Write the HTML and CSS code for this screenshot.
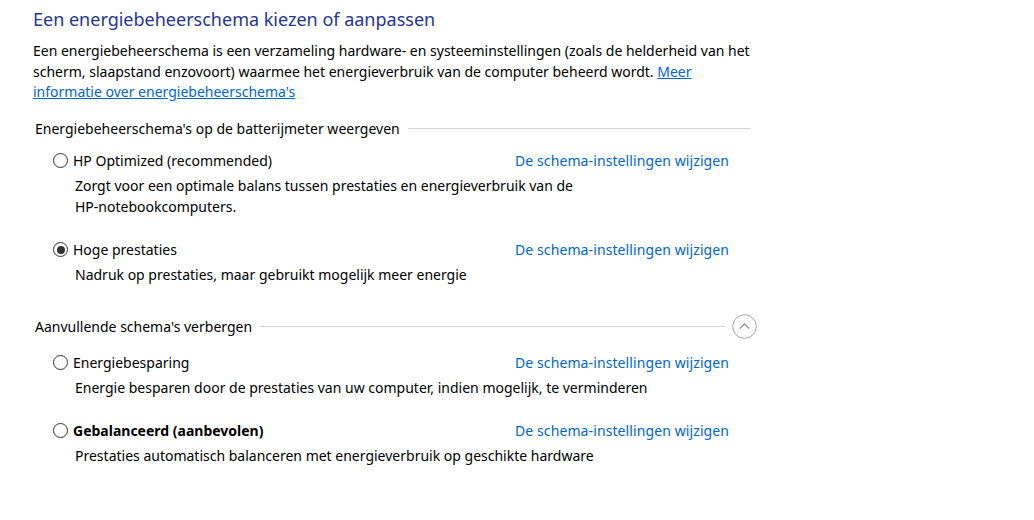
FILE: index.html
```html
<!DOCTYPE html>
<html lang="nl">
<head>
<meta charset="utf-8">
<title>Energiebeheer</title>
<link rel="stylesheet" href="styles.css">
</head>
<body>
<div class="page">
  <h1 class="title">Een energiebeheerschema kiezen of aanpassen</h1>
  <p class="intro">Een energiebeheerschema is een verzameling hardware- en systeeminstellingen (zoals de helderheid van het scherm, slaapstand enzovoort) waarmee het energieverbruik van de computer beheerd wordt. <a class="link" href="#">Meer informatie over energiebeheerschema's</a></p>

  <div class="section-head">
    <span class="section-title">Energiebeheerschema's op de batterijmeter weergeven</span>
    <span class="rule"></span>
  </div>

  <div class="plan">
    <div class="plan-row">
      <label class="plan-label"><span class="radio"></span><span>HP Optimized (recommended)</span></label>
      <a class="plan-link" href="#">De schema-instellingen wijzigen</a>
    </div>
    <div class="plan-desc">Zorgt voor een optimale balans tussen prestaties en energieverbruik van de<br>HP-notebookcomputers.</div>
  </div>

  <div class="plan">
    <div class="plan-row">
      <label class="plan-label"><span class="radio checked"></span><span>Hoge prestaties</span></label>
      <a class="plan-link" href="#">De schema-instellingen wijzigen</a>
    </div>
    <div class="plan-desc">Nadruk op prestaties, maar gebruikt mogelijk meer energie</div>
  </div>

  <div class="section-head second">
    <span class="section-title">Aanvullende schema's verbergen</span>
    <span class="rule"></span>
    <span class="chevron"><svg width="25" height="25" viewBox="0 0 25 25"><circle cx="12.5" cy="12.5" r="11.8" fill="none" stroke="#a6a6a6" stroke-width="1"/><path d="M7.8 14.6 L12.5 9.9 L17.2 14.6" fill="none" stroke="#8a8a8a" stroke-width="1.3"/></svg></span>
  </div>

  <div class="plan">
    <div class="plan-row">
      <label class="plan-label"><span class="radio"></span><span>Energiebesparing</span></label>
      <a class="plan-link" href="#">De schema-instellingen wijzigen</a>
    </div>
    <div class="plan-desc">Energie besparen door de prestaties van uw computer, indien mogelijk, te verminderen</div>
  </div>

  <div class="plan">
    <div class="plan-row">
      <label class="plan-label"><span class="radio"></span><span class="bold">Gebalanceerd (aanbevolen)</span></label>
      <a class="plan-link" href="#">De schema-instellingen wijzigen</a>
    </div>
    <div class="plan-desc">Prestaties automatisch balanceren met energieverbruik op geschikte hardware</div>
  </div>
</div>
</body>
</html>
```

FILE: styles.css
```css
html, body {
  margin: 0;
  padding: 0;
  background: #ffffff;
}
body {
  font-family: "Noto Sans", "Open Sans", sans-serif;
  font-size: 14px;
  color: #000000;
}
.page {
  width: 760px;
  padding: 6px 0 0 33px;
}
.title {
  margin: 0;
  font-size: 18px;
  font-weight: normal;
  color: #1f3597;
  line-height: 26px;
}
.intro {
  margin: 9px 0 0 0;
  width: 720px;
  line-height: 20.5px;
}
.link, .plan-link {
  color: #0066cc;
}
.link {
  text-decoration: underline;
}
.plan-link {
  text-decoration: none;
  letter-spacing: 0.1px;
}
.section-head {
  display: flex;
  align-items: center;
  margin: 14px 0 0 2px;
  width: 716px;
  height: 24px;
}
.section-head.second {
  margin-top: 28px;
  width: 722px;
  height: 28px;
}
.section-title {
  white-space: nowrap;
}
.rule {
  flex: 1;
  height: 1px;
  background: #d4d4d4;
  margin-left: 8px;
}
.chevron {
  display: flex;
  margin-left: 6px;
}
.plan {
  margin-left: 20px;
  margin-top: 8px;
}
.plan + .plan {
  margin-top: 21px;
}
.section-head.second + .plan {
  margin-top: 10px;
}
.plan-row {
  display: flex;
  align-items: center;
  height: 24px;
}
.plan-label {
  display: flex;
  align-items: center;
  width: 462px;
}
.radio {
  width: 15px;
  height: 15px;
  border: 1px solid #333333;
  border-radius: 50%;
  box-sizing: border-box;
  margin-right: 5px;
  display: flex;
  align-items: center;
  justify-content: center;
}
.radio.checked::after {
  content: "";
  width: 8px;
  height: 8px;
  border-radius: 50%;
  background: #333333;
}
.bold {
  font-weight: bold;
}
.plan-desc {
  margin-left: 22px;
  margin-top: 2px;
  line-height: 21px;
}
```
